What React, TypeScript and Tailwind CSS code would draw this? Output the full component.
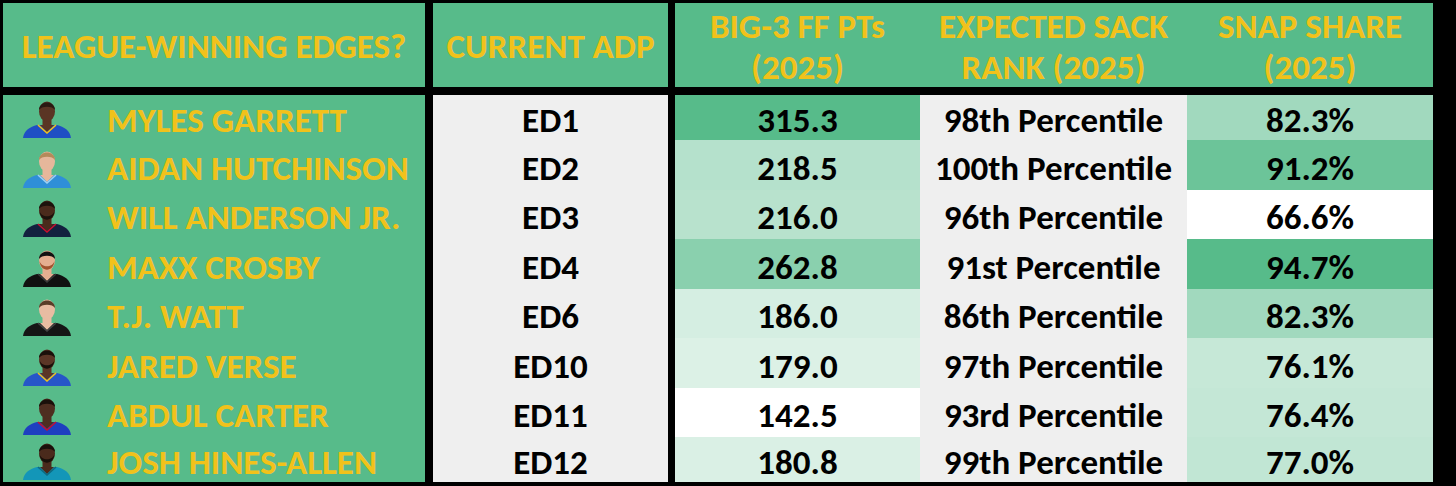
type Player = {
  name: string;
  adp: string;
  pts: string;
  ptsBg: string;
  sack: string;
  snap: string;
  snapBg: string;
  skin: string;
  jersey: string;
  trim: string;
  hair: string;
  beard?: string;
};

const players: Player[] = [
  { name: "MYLES GARRETT", adp: "ED1", pts: "315.3", ptsBg: "bg-[#57bb8a]", sack: "98th Percentile", snap: "82.3%", snapBg: "bg-[#a1d9be]", skin: "#5a3524", jersey: "#1f4fc4", trim: "#f2c21b", hair: "#2a1a12" },
  { name: "AIDAN HUTCHINSON", adp: "ED2", pts: "218.5", ptsBg: "bg-[#b5e1cc]", sack: "100th Percentile", snap: "91.2%", snapBg: "bg-[#6cc499]", skin: "#e6b79b", jersey: "#2f8fd8", trim: "#9fd0f2", hair: "#b58a5a" },
  { name: "WILL ANDERSON JR.", adp: "ED3", pts: "216.0", ptsBg: "bg-[#b8e2cd]", sack: "96th Percentile", snap: "66.6%", snapBg: "bg-white", skin: "#4a2a1c", jersey: "#13213f", trim: "#c8102e", hair: "#1c120c", beard: "#1c120c" },
  { name: "MAXX CROSBY", adp: "ED4", pts: "262.8", ptsBg: "bg-[#8ad0ae]", sack: "91st Percentile", snap: "94.7%", snapBg: "bg-[#57bb8a]", skin: "#e4ae90", jersey: "#111111", trim: "#3a3a3a", hair: "#111111", beard: "#a0522d" },
  { name: "T.J. WATT", adp: "ED6", pts: "186.0", ptsBg: "bg-[#d5eee2]", sack: "86th Percentile", snap: "82.3%", snapBg: "bg-[#a1d9be]", skin: "#e8bca2", jersey: "#151515", trim: "#444444", hair: "#5a3d28" },
  { name: "JARED VERSE", adp: "ED10", pts: "179.0", ptsBg: "bg-[#dcf1e6]", sack: "97th Percentile", snap: "76.1%", snapBg: "bg-[#c6e8d7]", skin: "#5b3626", jersey: "#2756c8", trim: "#f2c21b", hair: "#1a100a", beard: "#1a100a" },
  { name: "ABDUL CARTER", adp: "ED11", pts: "142.5", ptsBg: "bg-white", sack: "93rd Percentile", snap: "76.4%", snapBg: "bg-[#c4e7d6]", skin: "#4e2e20", jersey: "#1e3fc0", trim: "#c8102e", hair: "#1a100a" },
  { name: "JOSH HINES-ALLEN", adp: "ED12", pts: "180.8", ptsBg: "bg-[#daf0e5]", sack: "99th Percentile", snap: "77.0%", snapBg: "bg-[#c1e6d4]", skin: "#4a2a1c", jersey: "#1396b8", trim: "#0d6a82", hair: "#1a100a", beard: "#1a100a" },
];

const font = "font-['Carlito','Liberation_Sans_Narrow','Open_Sans',sans-serif]";

function Avatar({ p }: { p: Player }) {
  return (
    <svg width="52" height="38" viewBox="0 0 52 38" className="shrink-0 self-end mb-[2px]">
      <path d="M2 38 C3 30 9 27 16 25 L36 25 C43 27 49 30 50 38 Z" fill={p.jersey} />
      <path d="M19 25 L26 32 L33 25 Z" fill={p.skin} />
      <path d="M17 25 L26 33 L35 25" fill="none" stroke={p.trim} strokeWidth="1.6" />
      <rect x="21.5" y="17" width="9" height="10" fill={p.skin} />
      <ellipse cx="26" cy="11.5" rx="8" ry="10" fill={p.skin} />
      <path d="M18 10 C18 0 34 0 34 10 C32 5.5 20 5.5 18 10 Z" fill={p.hair} />
      {p.beard && <path d="M18.5 12 C19.5 23.5 32.5 23.5 33.5 12 C31.5 19 20.5 19 18.5 12 Z" fill={p.beard} />}
    </svg>
  );
}

export default function App() {
  return (
    <div className={`w-[1456px] h-[486px] bg-black pt-[3px] pl-[3px] pr-[8px] pb-[4px] ${font}`}>
      <div className="grid h-full grid-cols-[430px_242px_245px_267px_246px] grid-rows-[92px_45px_repeat(6,minmax(0,1fr))_45px] font-bold">
        {/* header */}
        <div className="flex items-center justify-center bg-[#57bb8a] pt-[3px] text-[35px] text-[#f1c21b] border-r-[8px] border-b-[8px] border-black">
          LEAGUE-WINNING EDGES?
        </div>
        <div className="flex items-center justify-center bg-[#57bb8a] pt-[3px] text-[35px] text-[#f1c21b] border-r-[7px] border-b-[8px] border-black">
          CURRENT ADP
        </div>
        <div className="flex flex-col items-center justify-center bg-[#57bb8a] pt-[4px] text-[35px] leading-[41px] text-[#f1c21b] border-b-[8px] border-black">
          <span>BIG-3 FF PTs</span>
          <span>(2025)</span>
        </div>
        <div className="flex flex-col items-center justify-center bg-[#57bb8a] pt-[4px] text-[35px] leading-[41px] text-[#f1c21b] border-b-[8px] border-black">
          <span>EXPECTED SACK</span>
          <span>RANK (2025)</span>
        </div>
        <div className="flex flex-col items-center justify-center bg-[#57bb8a] pt-[4px] text-[35px] leading-[41px] text-[#f1c21b] border-b-[8px] border-black">
          <span>SNAP SHARE</span>
          <span>(2025)</span>
        </div>

        {players.map((p) => (
          <Row key={p.name} p={p} />
        ))}
      </div>
    </div>
  );
}

function Row({ p }: { p: Player }) {
  const cell = "flex items-center justify-center pt-[6px] text-[35px] text-black whitespace-nowrap";
  return (
    <>
      <div className="flex items-center bg-[#57bb8a] pl-[18px] border-r-[8px] border-black overflow-hidden">
        <Avatar p={p} />
        <span className="ml-[34px] pt-[6px] text-[35px] text-[#f1c21b] whitespace-nowrap">{p.name}</span>
      </div>
      <div className={`${cell} bg-[#efefef] border-r-[7px] border-black`}>{p.adp}</div>
      <div className={`${cell} ${p.ptsBg}`}>{p.pts}</div>
      <div className={`${cell} bg-[#efefef]`}>{p.sack}</div>
      <div className={`${cell} ${p.snapBg}`}>{p.snap}</div>
    </>
  );
}
